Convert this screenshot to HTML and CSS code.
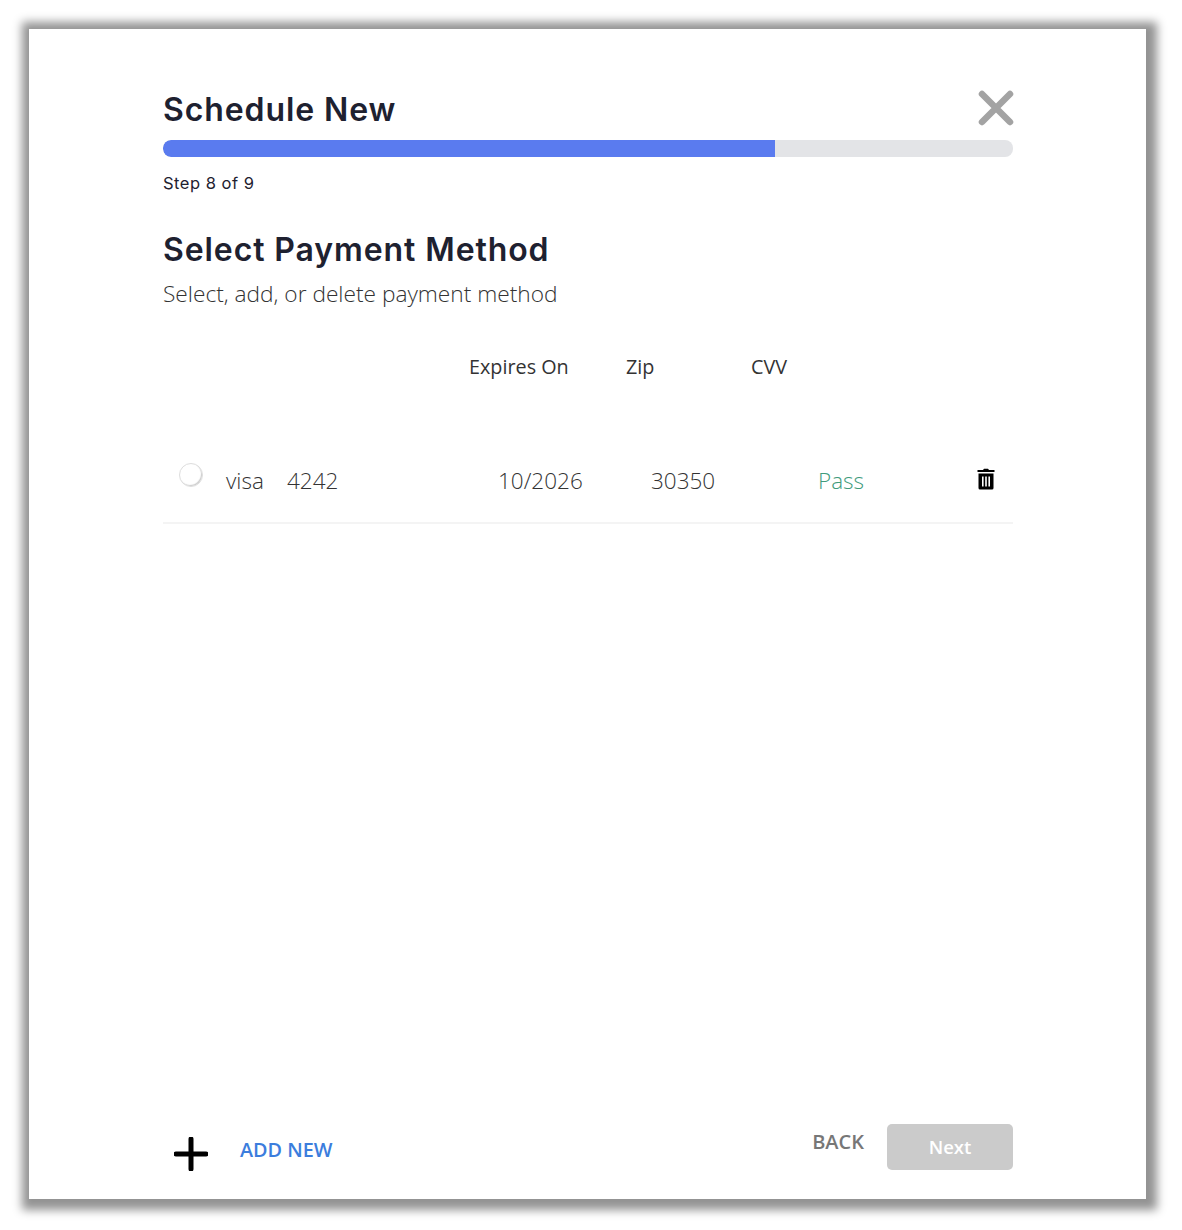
FILE: index.html

```html
<!DOCTYPE html>
<html lang="en">
<head>
    <meta charset="UTF-8">
    <meta name="viewport" content="width=device-width, initial-scale=1.0">
    <title>Schedule New</title>
    <link rel="stylesheet" href="styles.css">
</head>
<body>
    <div class="modal">
        <div class="title-row">
            <h1>Schedule New</h1>
            <svg class="close" viewBox="0 0 36 36" width="36" height="36">
                <path d="M4 4 L32 32 M32 4 L4 32" stroke="#a3a3a3" stroke-width="6.5" stroke-linecap="round"/>
            </svg>
        </div>
        <div class="progress"><div class="progress-fill"></div></div>
        <p class="step">Step 8 of 9</p>

        <h2>Select Payment Method</h2>
        <p class="subtitle">Select, add, or delete payment method</p>

        <div class="table-head">
            <span class="head-expires">Expires On</span>
            <span class="head-zip">Zip</span>
            <span>CVV</span>
        </div>

        <div class="card-row">
            <span class="radio"></span>
            <span class="cell-brand">visa</span>
            <span class="cell-number">4242</span>
            <span class="cell-expires">10/2026</span>
            <span class="cell-zip">30350</span>
            <span class="cell-cvv">Pass</span>
            <svg class="trash" viewBox="0 0 18 22" width="18" height="22">
                <path d="M6 2 L7 0.8 H11 L12 2 H17.5 V4 H0.5 V2 Z" fill="#000"/>
                <path fill-rule="evenodd" fill="#000" d="M1.5 5.5 H16.5 V20 Q16.5 21.5 15 21.5 H3 Q1.5 21.5 1.5 20 Z M5 8.5 V18.5 H6.6 V8.5 Z M8.2 8.5 V18.5 H9.8 V8.5 Z M11.4 8.5 V18.5 H13 V8.5 Z"/>
            </svg>
        </div>

        <div class="footer">
            <div class="add-new">
                <svg class="plus" viewBox="0 0 34 34" width="34" height="34">
                    <path d="M17 2 V32 M2 17 H32" stroke="#000" stroke-width="5" stroke-linecap="round"/>
                </svg>
                <span>ADD NEW</span>
            </div>
            <div class="actions">
                <span class="back">BACK</span>
                <button class="next">Next</button>
            </div>
        </div>
    </div>
</body>
</html>
```

FILE: styles.css

```css
body {
    margin: 0;
    padding: 29px 0 31px 29px;
    background-color: #fff;
    font-family: "Open Sans", Arial, sans-serif;
}
.modal {
    width: 1117px;
    height: 1170px;
    padding: 60px 133px 29px 134px;
    box-sizing: border-box;
    background-color: #fff;
    box-shadow: 2px 2px 9px 9px #939393;
    display: flex;
    flex-direction: column;
}
.title-row {
    display: flex;
    justify-content: space-between;
    align-items: center;
    height: 41px;
}
h1, h2 {
    margin: 0;
    font-family: Inter, Arial, sans-serif;
    font-size: 32px;
    font-weight: 600;
    line-height: 41px;
    letter-spacing: 0.9px;
    color: #1e2130;
}
.close {
    margin-top: -3px;
    margin-right: -1px;
}
.progress {
    height: 17px;
    margin-top: 10px;
    background-color: #e3e4e7;
    border-radius: 8px;
    overflow: hidden;
}
.progress-fill {
    width: 72%;
    height: 100%;
    background-color: #5a7bef;
    border-radius: 8px 0 0 8px;
}
.step {
    margin: 16px 0 0;
    font-family: Inter, Arial, sans-serif;
    font-size: 16.5px;
    line-height: 20px;
    letter-spacing: 0.5px;
    color: #1e2130;
}
h2 {
    margin-top: 36px;
}
.subtitle {
    margin: 9px 0 0;
    font-size: 22.7px;
    font-weight: 300;
    line-height: 30px;
    color: #333;
}
.table-head {
    display: flex;
    margin-top: 45px;
    padding-left: 306px;
    font-size: 19.8px;
    line-height: 26px;
    color: #333;
}
.head-expires {
    width: 157px;
}
.head-zip {
    width: 125px;
}
.card-row {
    display: flex;
    align-items: center;
    height: 68px;
    margin-top: 66px;
    padding-bottom: 8px;
    border-bottom: 2px solid #f4f4f4;
    font-size: 22.5px;
    font-weight: 300;
    color: #333;
}
.radio {
    width: 24px;
    height: 24px;
    margin: -11px 23px 0 16px;
    box-sizing: border-box;
    border: 1px solid #ddd;
    border-radius: 50%;
    box-shadow: inset -1px -1px 1px #ccc;
}
.cell-brand {
    width: 61px;
}
.cell-number {
    width: 211px;
}
.cell-expires {
    width: 153px;
}
.cell-zip {
    width: 167px;
}
.cell-cvv {
    width: 159px;
    color: #3f9b7c;
}
.trash {
    margin-top: -2px;
}
.footer {
    margin-top: auto;
    display: flex;
    justify-content: space-between;
    align-items: flex-end;
}
.add-new {
    display: flex;
    align-items: center;
    padding-left: 11px;
    color: #3b7ddd;
    font-size: 19.8px;
    font-weight: 600;
}
.add-new span {
    margin-left: 32px;
    margin-top: -9px;
}
.plus {
    display: block;
    margin-bottom: -1px;
}
.actions {
    display: flex;
    align-items: center;
}
.back {
    margin-right: 23px;
    margin-top: -12px;
    font-size: 20px;
    font-weight: 600;
    color: #777;
}
.next {
    width: 126px;
    height: 46px;
    padding-bottom: 3px;
    border: none;
    border-radius: 5px;
    background-color: #cbcbcb;
    color: #fff;
    font-family: "Open Sans", Arial, sans-serif;
    font-size: 18.5px;
    font-weight: 600;
    cursor: pointer;
}
```
